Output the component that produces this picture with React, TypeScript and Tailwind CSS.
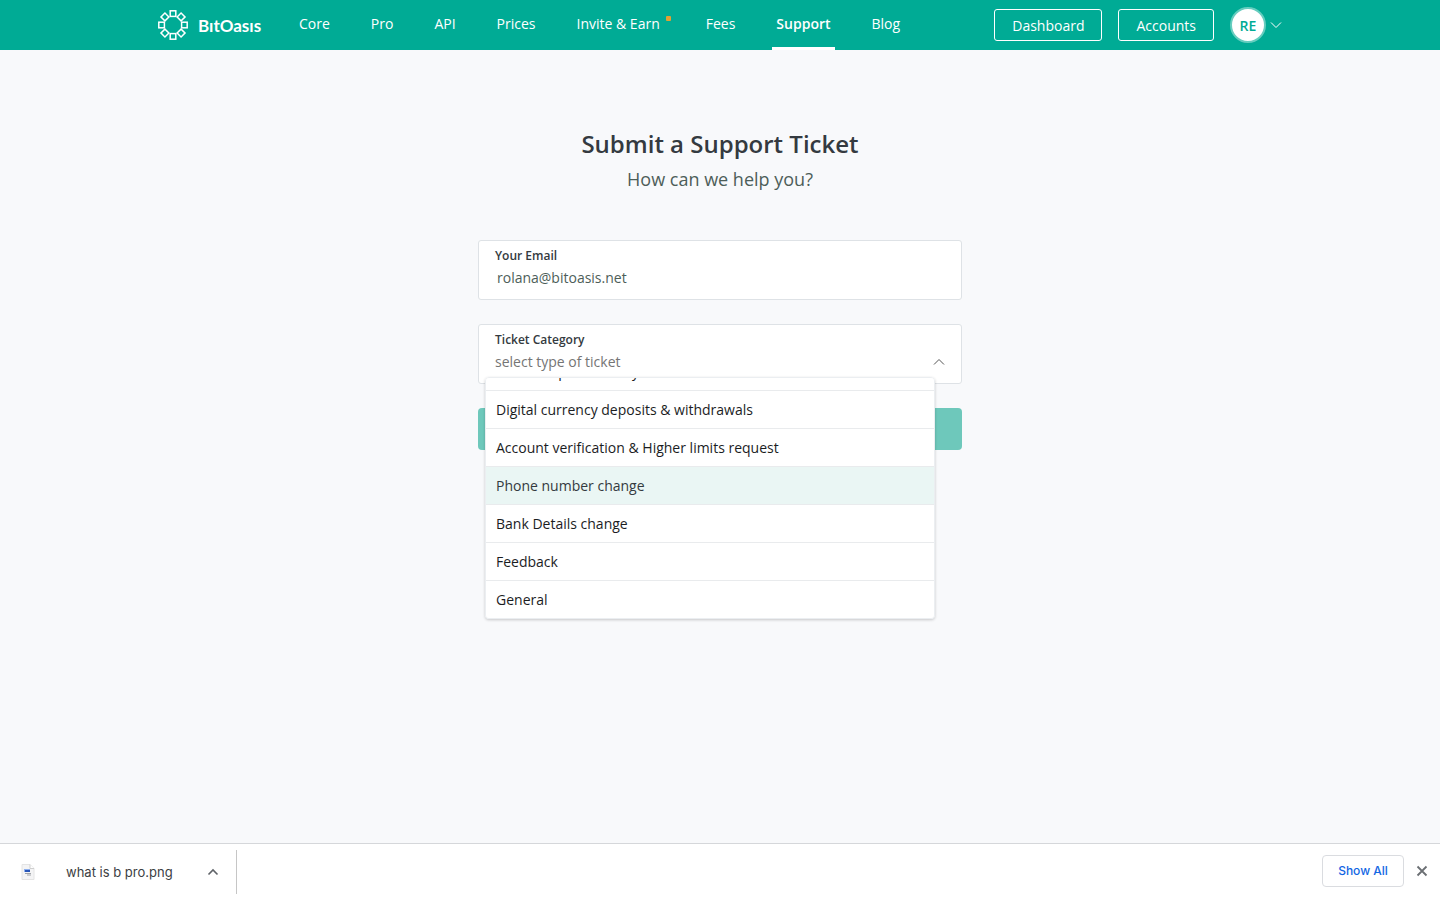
import React, { useEffect, useRef, useState } from 'react';

const links = ['Core', 'Pro', 'API', 'Prices', 'Invite & Earn', 'Fees', 'Support', 'Blog'];

const categories = [
  'Wallet Deposit history',
  'Digital currency deposits & withdrawals',
  'Account verification & Higher limits request',
  'Phone number change',
  'Bank Details change',
  'Feedback',
  'General',
];

function Logo() {
  return (
    <a href="#" className="flex items-center gap-2.5 w-[105px]">
      <svg width="30" height="30" viewBox="0 0 30 30" fill="none" stroke="currentColor" strokeWidth="1.5" className="shrink-0">
        {[0, 45, 90, 135, 180, 225, 270, 315].map(angle => (
          <rect key={angle} x="12.2" y="0.8" width="5.6" height="5.6" transform={`rotate(${angle} 15 15)`} />
        ))}
      </svg>
      <span className="font-['Lato',sans-serif] font-bold text-[17px] leading-none">BıtOasıs</span>
    </a>
  );
}

function Chevron({ up = false, className = '' }: { up?: boolean; className?: string }) {
  return (
    <svg width="12" height="8" viewBox="0 0 12 8" fill="none" stroke="currentColor" className={className}>
      <path d={up ? 'M1 6.5 6 1.5l5 5' : 'M1 1.5l5 5 5-5'} />
    </svg>
  );
}

function Header() {
  return (
    <header className="bg-[#00ab95] text-white">
      <div className="max-w-[1140px] h-[50px] mx-auto px-2 flex items-center">
        <Logo />
        <nav className="flex gap-[33px] ml-8 h-full text-sm font-medium">
          {links.map(name => (
            <a
              key={name}
              href="#"
              className={
                name === 'Support'
                  ? 'px-1 pt-3.5 leading-5 border-b-3 border-white font-semibold'
                  : 'px-1 pt-3.5 leading-5 flex'
              }
            >
              {name}
              {name === 'Invite & Earn' && <span className="w-[5px] h-[5px] mt-0.5 ml-1.5 -mr-1.5 rounded-[1px] bg-[#e3a033]" />}
            </a>
          ))}
        </nav>
        <div className="ml-auto flex items-center">
          <button className="h-8 px-[17px] pt-0.5 border border-white rounded-[3px] text-sm font-medium">Dashboard</button>
          <button className="h-8 px-[17px] pt-0.5 ml-4 border border-white rounded-[3px] text-sm font-medium">Accounts</button>
          <button className="ml-4 flex items-center gap-1" aria-label="Profile menu">
            <span className="w-9 h-9 pt-0.5 rounded-full border-2 border-[#66cdbf] bg-white text-[#00ab95] text-sm font-semibold flex items-center justify-center">
              RE
            </span>
            <Chevron />
          </button>
        </div>
      </div>
    </header>
  );
}

function CategoryMenu({ onPick }: { onPick: (name: string) => void }) {
  const ref = useRef<HTMLUListElement>(null);

  useEffect(() => {
    if (ref.current) ref.current.scrollTop = ref.current.scrollHeight;
  }, []);

  return (
    <ul
      ref={ref}
      className="absolute z-10 left-1.5 top-[52px] w-[450px] h-[242px] overflow-y-auto [scrollbar-width:none] bg-white rounded border border-[#ebeef1] shadow-[0_1px_3px_rgba(0,0,0,0.2)]"
    >
      {categories.map(name => (
        <li key={name} className="border-b border-[#e9ebed] last:border-b-0">
          <button
            type="button"
            onClick={() => onPick(name)}
            className={
              name === 'Phone number change'
                ? 'block w-full h-[37px] px-2.5 text-left text-sm bg-[#eaf6f4] text-[#343a40]'
                : 'block w-full h-[37px] px-2.5 text-left text-sm text-[#1b1d1f]'
            }
          >
            {name}
          </button>
        </li>
      ))}
    </ul>
  );
}

function TicketForm() {
  const [category, setCategory] = useState('');
  const [open, setOpen] = useState(true);

  return (
    <form className="w-full max-w-[484px] mx-auto mt-[49px] flex flex-col gap-6" onSubmit={e => e.preventDefault()}>
      <div className="h-[60px] px-4 pt-[7px] bg-white border border-[#dee2e6] rounded-[3px]">
        <label htmlFor="email" className="block text-xs leading-4 font-semibold text-[#343a40]">Your Email</label>
        <input
          id="email"
          type="email"
          defaultValue="rolana@bitoasis.net"
          className="block w-full h-[26px] px-0.5 text-sm text-[#4d5e59] outline-none"
        />
      </div>

      <div className="relative h-[60px] px-4 pt-[7px] bg-white border border-[#dee2e6] rounded-[3px]">
        <label htmlFor="category" className="block text-xs leading-4 font-semibold text-[#343a40]">Ticket Category</label>
        <div className="flex items-center">
          <select
            id="category"
            value={category}
            onChange={e => setCategory(e.target.value)}
            className="block flex-1 h-7 appearance-none bg-transparent text-sm text-[#757575] outline-none"
          >
            <option value="">select type of ticket</option>
            {categories.map(name => <option key={name}>{name}</option>)}
          </select>
          <Chevron up className="text-[#555]" />
        </div>
        {open && <CategoryMenu onPick={name => { setCategory(name); setOpen(false); }} />}
      </div>

      <button type="submit" aria-label="Submit" className="h-[42px] rounded bg-[#6ec8bb]" />
    </form>
  );
}

function DownloadBar() {
  return (
    <footer className="h-[57px] flex items-center bg-white border-t border-[#d5d7da] font-['Inter',sans-serif]">
      <div className="h-11 w-[237px] pl-5 pr-[15px] flex items-center border-r border-[#c6c6c6]">
        <svg width="16" height="16" viewBox="0 0 16 16">
          <path d="M2 .5h8l4 4v11H2z" fill="#f4f4f5" stroke="#e4e4e4" />
          <path d="M10 .5v4h4" fill="#fff" stroke="#cfcfcf" />
          <path d="M4 5h6v3H4z" fill="#8fb0ee" />
          <path d="M5 6h5v2H5z" fill="#2856b8" />
          <path d="M5 9.5h6M7 11h4" stroke="#a0a4aa" />
        </svg>
        <span className="ml-[30px] pt-0.5 text-[13px] text-[#3c4043]">what is b pro.png</span>
        <button className="ml-auto w-4 flex justify-center text-[#5f6368]" aria-label="File options">
          <svg width="12" height="8" viewBox="0 0 12 8" fill="none" stroke="currentColor" strokeWidth="1.6">
            <path d="M1.5 6.5 6 2l4.5 4.5" />
          </svg>
        </button>
      </div>
      <button className="ml-auto mb-0.5 w-[82px] h-8 border border-[#dadce0] rounded text-xs font-medium text-[#1266e3]">Show All</button>
      <button className="mx-3 mb-0.5 w-3 text-[#6b6f73]" aria-label="Close">
        <svg width="12" height="12" viewBox="0 0 12 12" stroke="currentColor" strokeWidth="1.8">
          <path d="M1.5 1.5l9 9M10.5 1.5l-9 9" />
        </svg>
      </button>
    </footer>
  );
}

export default function App() {
  return (
    <div className="min-h-screen flex flex-col bg-[#f8f9fb] font-['Open_Sans',sans-serif]">
      <Header />
      <main className="flex-1 pt-[78px] px-4">
        <h1 className="text-2xl leading-8 font-semibold text-center text-[#343a40]">Submit a Support Ticket</h1>
        <p className="mt-[7px] text-lg leading-6 text-center text-[#4d5e59]">How can we help you?</p>
        <TicketForm />
      </main>
      <DownloadBar />
    </div>
  );
}
